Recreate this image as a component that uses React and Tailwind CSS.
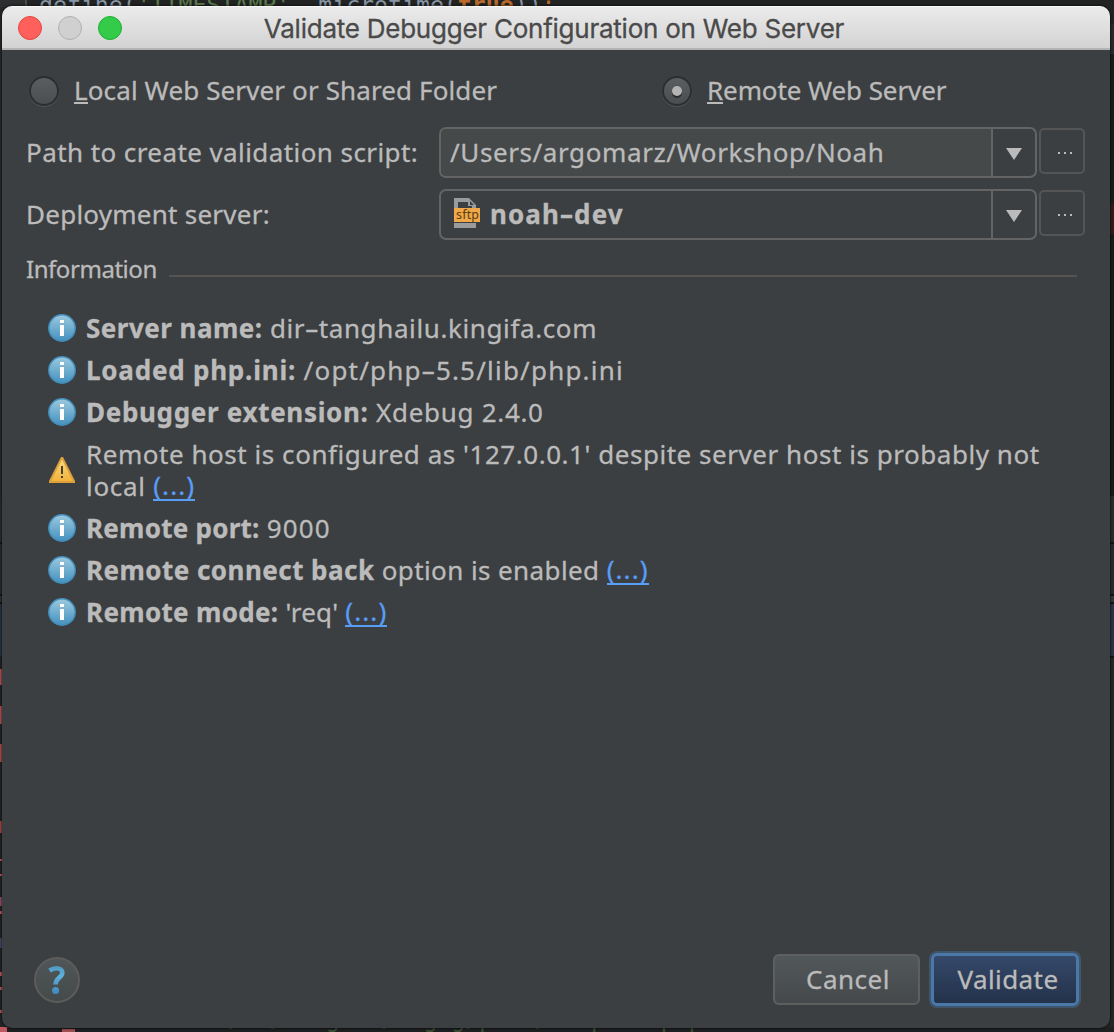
import React from 'react';

function Backdrop() {
  return (
    <div className="absolute inset-0 overflow-hidden bg-[#242526]" aria-hidden="true">
      <div className="flex h-full justify-between">
        <div className="flex w-[3px] flex-col bg-[#242526]">
          <div className="h-[497px] bg-[#27292a]" />
          <div className="h-[45px] bg-[#2c2d2e]" />
          <div className="h-[2px] bg-[#151515]" />
          <div className="h-[50px] bg-[#2b2c2d]" />
          <div className="h-[2px] bg-[#151515]" />
          <div className="h-[6px] bg-[#2f3133]" />
          <div className="h-[2px] bg-[#151515]" />
          <div className="h-[52px] bg-[#28334a]" />
          <div className="mt-[13px] h-[16px] bg-[#b0545a]" />
          <div className="mt-[21px] h-[18px] bg-[#b0545a]" />
          <div className="mt-[20px] h-[18px] bg-[#b0524c]" />
          <div className="mt-[59px] h-[12px] bg-[#a04a4a]" />
          <div className="mt-[26px] h-[2px] bg-[#c05a60]" />
          <div className="mt-[13px] h-[2px] bg-[#c05a60]" />
          <div className="mt-[21px] h-[9px] bg-[#94506a]" />
          <div className="mt-[5px] h-[3px] bg-[#c05a60]" />
          <div className="mt-[24px] h-[10px] bg-[#4c4668]" />
          <div className="mt-[24px] h-[4px] bg-[#c05a60]" />
          <div className="mt-[11px] h-[3px] bg-[#c05a60]" />
          <div className="mt-[20px] h-[3px] bg-[#c05a60]" />
        </div>
        <div className="flex w-[4px] flex-col bg-[#262727]">
          <div className="h-[24px] bg-[#212322]" />
          <div className="h-[30px] bg-[#292b2c]" />
          <div className="h-[150px] bg-[#1b1c1c]" />
          <div className="h-[30px] bg-[#331c1d]" />
          <div className="h-[262px] bg-[#191a1a]" />
          <div className="h-[46px] bg-[#2b2c2c]" />
          <div className="h-[2px] bg-[#151515]" />
          <div className="h-[50px] bg-[#292a2b]" />
          <div className="h-[2px] bg-[#151515]" />
          <div className="h-[6px] bg-[#343738]" />
          <div className="h-[2px] bg-[#151515]" />
          <div className="h-[52px] bg-[#2a3444]" />
          <div className="h-[2px] bg-[#151515]" />
        </div>
      </div>
      <div className="absolute left-0 top-0 flex h-[7px] w-full overflow-hidden bg-[#222423]">
        <div className="w-[25px] shrink-0 bg-[#2c2e2f]" />
        <div className="w-[2px] shrink-0 bg-[#4a4a4a]" />
        <pre className="-mt-[11px] ml-[12px] font-['DejaVu_Sans_Mono',monospace] text-[23.2px] leading-[32px] text-[#8795a5]">
          define(<span className="text-[#5d7a4d]">'TIMESTAMP'</span>, microtime(
          <span className="font-bold text-[#b96a2c]">true</span>))<span className="text-[#b96a2c]">;</span>
        </pre>
      </div>
      <div className="absolute bottom-0 left-0 flex h-[5px] w-full overflow-hidden bg-[#1f2021]">
        <div className="h-[5px] w-[7px] shrink-0 bg-[#c05a60]" />
        <div className="ml-[55px] mt-[2px] h-[3px] w-[13px] shrink-0 bg-[#a04f50]" />
        <pre className="-mt-[24px] ml-[153px] font-['DejaVu_Sans_Mono',monospace] text-[23.2px] leading-[32px] text-[#3d5234]">
          {'/  /   g   /  g g/p   /   p    p p'}
        </pre>
      </div>
    </div>
  );
}

function TitleBar() {
  return (
    <div className="relative flex h-[44px] shrink-0 items-center justify-center border-b-2 border-b-[#b4b4b4] border-t border-t-[#f8f8f8] bg-linear-to-b from-[#ebebeb] to-[#d3d3d3]">
      <div className="absolute left-[16px] top-[9px] flex gap-4">
        <span className="size-6 rounded-full border border-[#e2453f] bg-[#ff605c]" />
        <span className="size-6 rounded-full border border-[#b0b0b0] bg-[#d0d0d0]" />
        <span className="size-6 rounded-full border border-[#1fae33] bg-[#34cb49]" />
      </div>
      <h1 className="mr-[4px] mt-[2px] whitespace-nowrap font-['Inter',sans-serif] text-[26px] leading-8 tracking-[-0.24px] text-[#4a4a4a]">
        Validate Debugger Configuration on Web Server
      </h1>
    </div>
  );
}

function Radio({ checked, children }) {
  return (
    <label className="flex h-8 items-center">
      <span className="mt-[2px] flex size-[30px] items-center justify-center rounded-full border-2 border-[#2c2e2f] bg-linear-to-b from-[#5a5e60] to-[#4a4e50] shadow-[0_1px_1px_#54585a]">
        {checked && <span className="size-[10px] rounded-full bg-[#b4b4b4] shadow-[0_2px_0_#2b2b2b]" />}
      </span>
      <span className="ml-[15px] whitespace-nowrap">{children}</span>
    </label>
  );
}

function Mnemonic({ children }) {
  return <span className="inline-block h-[30px] border-b-2 border-[#bbbbbb]">{children}</span>;
}

function ComboRow({ label, filled, children }) {
  return (
    <div className="flex h-[51px]">
      <div className="w-[413px] shrink-0 pt-[9px]">{label}</div>
      <div className="flex w-[598px] shrink-0 overflow-hidden rounded-[7px] border-2 border-[#646464]">
        <div className={filled ? 'flex flex-1 items-center bg-[#45494a] pl-[9px]' : 'flex flex-1 items-center pl-[13px]'}>
          {children}
        </div>
        <div className="flex w-[44px] items-center justify-center border-l-2 border-[#646464] pr-px">
          <svg width="16" height="12" viewBox="0 0 16 12" className="mt-[2px]">
            <path d="M0 0h16L8 12z" fill="#bbbbbb" />
          </svg>
        </div>
      </div>
      <button className="ml-[2px] mt-px flex h-[46px] w-[46px] shrink-0 items-center justify-center gap-1 rounded-[5px] border-2 border-[#555555] pl-[5px] pt-1">
        <span className="size-[2px] bg-[#bbbbbb]" />
        <span className="size-[2px] bg-[#bbbbbb]" />
        <span className="size-[2px] bg-[#bbbbbb]" />
      </button>
    </div>
  );
}

function SftpIcon() {
  return (
    <svg width="26" height="30" viewBox="0 0 26 30" className="-mt-[3px] shrink-0">
      <path d="M0 0h15l7 7v3h-4V8h-4V4H4v6H0zM16 3v4h4z" fill="#9b9b9b" fillRule="evenodd" />
      <path d="M0 25h22v5H0z" fill="#9b9b9b" />
      <rect y="10" width="26" height="14" fill="#f0a848" />
      <text x="13.5" y="20.5" textAnchor="middle" textLength="23" fontSize="12.5" fill="#5a3d14" fontFamily="Noto Sans, sans-serif">
        sftp
      </text>
    </svg>
  );
}

function InfoIcon() {
  return (
    <svg width="28" height="28" viewBox="0 0 28 28" className="shrink-0">
      <defs>
        <linearGradient id="info-fill" x1="0" y1="0" x2="0" y2="1">
          <stop offset="0" stopColor="#9cc9de" />
          <stop offset="1" stopColor="#4491bf" />
        </linearGradient>
      </defs>
      <circle cx="14" cy="14" r="13.2" fill="url(#info-fill)" stroke="#428ebc" strokeWidth="1.5" />
      <path d="M12 6h4v3h-4zM12 11h4v11h-4z" fill="#fff" />
    </svg>
  );
}

function WarningIcon() {
  return (
    <svg width="28" height="28" viewBox="0 0 28 28" className="shrink-0">
      <defs>
        <linearGradient id="warn-fill" x1="0" y1="0" x2="0" y2="1">
          <stop offset="0" stopColor="#f9d97c" />
          <stop offset="1" stopColor="#f3b23c" />
        </linearGradient>
      </defs>
      <path d="M13 1h2L27 25v2H1v-2z" fill="#dda03a" />
      <path d="M14 3.5L24.7 25H3.3z" fill="url(#warn-fill)" />
      <path d="M13 10h2v8h-2zM13 20h2v2h-2z" fill="#4a4032" />
    </svg>
  );
}

function Row({ warning, children }) {
  return (
    <li className="flex items-center py-[5px]">
      {warning ? <WarningIcon /> : <InfoIcon />}
      <p className="ml-[10px] whitespace-pre leading-8">{children}</p>
    </li>
  );
}

function More() {
  return (
    <a className="relative -mt-px inline-block h-8 border-b-2 border-[#589df6] align-top tracking-[1.1px] text-[#589df6]">(...)</a>
  );
}

export default function App() {
  return (
    <div className="relative h-[1032px] w-[1114px] overflow-hidden">
      <Backdrop />
      <div className="relative ml-[2px] flex h-full w-[1108px] pb-[4px] pt-[6px]">
        <main className="flex w-full flex-col overflow-hidden rounded-[10px] bg-[#3c3f41] font-['Noto_Sans',sans-serif] text-[26px] leading-8 text-[#bbbbbb] shadow-[0_0_3px_#000000] [-webkit-text-stroke:0.3px]">
          <TitleBar />

          <div className="flex pl-[27px] pt-[24px]">
            <div className="w-[633px]">
              <Radio>
                <span className="tracking-[0.12px]"><Mnemonic>L</Mnemonic>ocal Web Server or Shared Folder</span>
              </Radio>
            </div>
            <Radio checked>
              <span className="tracking-[-0.1px]"><Mnemonic>R</Mnemonic>emote Web Server</span>
            </Radio>
          </div>

          <div className="mt-[21px] flex flex-col gap-[11px] pl-[24px]">
            <ComboRow filled label={<span className="tracking-[0.42px]">Path to create validation script:</span>}>
              <span className="-mt-px tracking-[0.6px]">/Users/argomarz/Workshop/Noah</span>
            </ComboRow>
            <ComboRow label={<span className="tracking-[0.25px]">Deployment server:</span>}>
              <SftpIcon />
              <b className="-mt-px ml-[10px] tracking-[1.1px]">noah–dev</b>
            </ComboRow>
          </div>

          <div className="mt-[13px] flex h-8 pl-[24px]">
            <h2 className="w-[143px] text-2xl leading-8 tracking-[-0.45px]">Information</h2>
            <div className="mt-[22px] h-[2px] w-[908px] bg-[#555452]" />
          </div>

          <ul className="mt-[22px] pl-[46px]">
            <Row><b className="tracking-[0.48px]">Server name: </b><span className="tracking-[0.61px]">dir–tanghailu.kingifa.com</span></Row>
            <Row><b className="tracking-[0.78px]">Loaded php.ini: </b><span className="tracking-[1.2px]">/opt/php–5.5/lib/php.ini</span></Row>
            <Row><b className="tracking-[0.68px]">Debugger extension: </b><span className="tracking-[0.7px]">Xdebug 2.4.0</span></Row>
            <Row warning>
              <span className="tracking-[0.54px]">Remote host is configured as '127.0.0.1' despite server host is probably not</span>
              <br />
              <span className="tracking-[0.7px]">local </span><More />
            </Row>
            <Row><b className="tracking-[0.25px]">Remote port: </b><span className="tracking-[1.2px]">9000</span></Row>
            <Row><b className="tracking-[0.46px]">Remote connect back </b><span className="tracking-[0.4px]">option is enabled </span><More /></Row>
            <Row><b className="tracking-[0.32px]">Remote mode: </b><span className="tracking-[0.2px]">'req' </span><More /></Row>
          </ul>

          <footer className="mt-auto flex items-center pb-[22px] pl-[32px] pr-[31px]">
            <button className="flex size-[46px] items-center justify-center rounded-full border-2 border-[#5c5c5a] bg-linear-to-b from-[#505557] to-[#454a4b]">
              <svg width="20" height="30" viewBox="0 0 20 30">
                <defs>
                  <linearGradient id="help-fill" x1="0" y1="0" x2="0" y2="30" gradientUnits="userSpaceOnUse">
                    <stop offset="0" stopColor="#4e95bd" />
                    <stop offset="0.35" stopColor="#5db0dc" />
                    <stop offset="1" stopColor="#3f86c0" />
                  </linearGradient>
                </defs>
                <path d="M2.5 5.5C5 3.8 7.2 3.2 9.5 3.2c3.5 0 5.8 1.6 5.8 4.5 0 5-6.7 4.8-6.7 11.8" fill="none" stroke="url(#help-fill)" strokeWidth="4.6" />
                <circle cx="8.6" cy="25.6" r="3.5" fill="url(#help-fill)" />
              </svg>
            </button>
            <button className="ml-auto h-[51px] w-[147px] rounded-[6px] border-2 border-[#5e6060] bg-linear-to-b from-[#525759] to-[#45494b] pb-px pl-[3px] tracking-[0.5px]">
              Cancel
            </button>
            <button className="ml-[11px] h-[53px] w-[148px] rounded-[6px] border-[3px] border-[#4a78a8] bg-linear-to-b from-[#35496a] to-[#24324a] pb-px pl-[6px] tracking-[0.4px] shadow-[0_0_0_2px_#40566d]">
              Validate
            </button>
          </footer>
        </main>
      </div>
    </div>
  );
}
